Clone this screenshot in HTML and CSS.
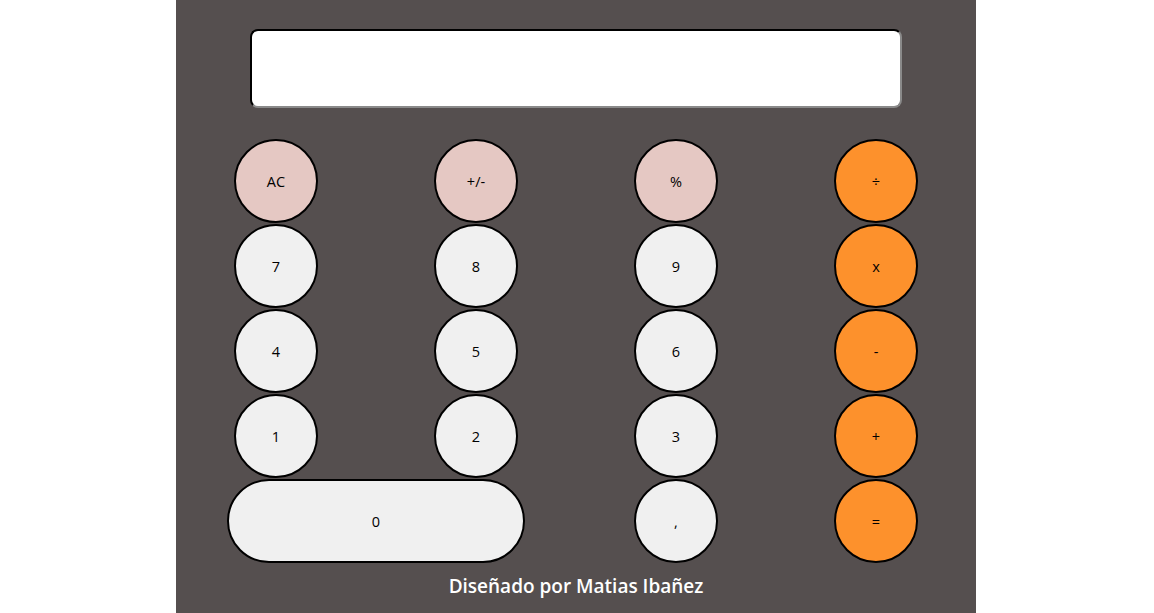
FILE: index.html
```html
<!DOCTYPE html>
<html lang="es">
<head>
<meta charset="utf-8">
<title>Calculadora</title>
<link rel="stylesheet" href="styles.css">
</head>
<body>
<main class="calc">
  <input class="display" type="text">
  <div class="keys">
    <button class="key fn">AC</button>
    <button class="key fn">+/-</button>
    <button class="key fn">%</button>
    <button class="key op">÷</button>
    <button class="key num">7</button>
    <button class="key num">8</button>
    <button class="key num">9</button>
    <button class="key op">x</button>
    <button class="key num">4</button>
    <button class="key num">5</button>
    <button class="key num">6</button>
    <button class="key op">-</button>
    <button class="key num">1</button>
    <button class="key num">2</button>
    <button class="key num">3</button>
    <button class="key op">+</button>
    <button class="key num zero">0</button>
    <button class="key num">,</button>
    <button class="key op">=</button>
  </div>
  <p class="credit">Diseñado por Matias Ibañez</p>
</main>
</body>
</html>
```
FILE: styles.css
```css
html, body {
  margin: 0;
  padding: 0;
  background: #ffffff;
}
.calc {
  width: 800px;
  height: 613px;
  margin-left: calc(50% - 401px);
  background: #554f4f;
  display: flex;
  flex-direction: column;
  align-items: center;
  padding-top: 29px;
  box-sizing: border-box;
  font-family: "Open Sans", "Noto Sans", sans-serif;
}
.display {
  width: 652px;
  height: 79px;
  box-sizing: border-box;
  border: 2px inset #767676;
  border-top-color: #1e1e1e;
  border-left-color: #1e1e1e;
  border-bottom-color: #8a8a8a;
  border-right-color: #8a8a8a;
  border-radius: 8px;
  background: #ffffff;
  margin: 0;
}
.keys {
  margin-top: 31px;
  display: grid;
  grid-template-columns: repeat(4, 200px);
  grid-template-rows: repeat(5, 85px);
}
.key {
  justify-self: center;
  width: 84px;
  height: 84px;
  border-radius: 42px;
  border: 2px solid #000000;
  box-sizing: border-box;
  font-family: "Open Sans", "Noto Sans", sans-serif;
  font-size: 14.5px;
  color: #000000;
  padding: 0;
}
.fn { background: #e5c8c3; }
.num { background: #f0f0f0; }
.op { background: #fd912c; }
.zero {
  grid-column: span 2;
  width: 298px;
}
.credit {
  margin: 10px 0 0;
  color: #ffffff;
  font-weight: 600;
  font-size: 19px;
  line-height: 24px;
}
```
